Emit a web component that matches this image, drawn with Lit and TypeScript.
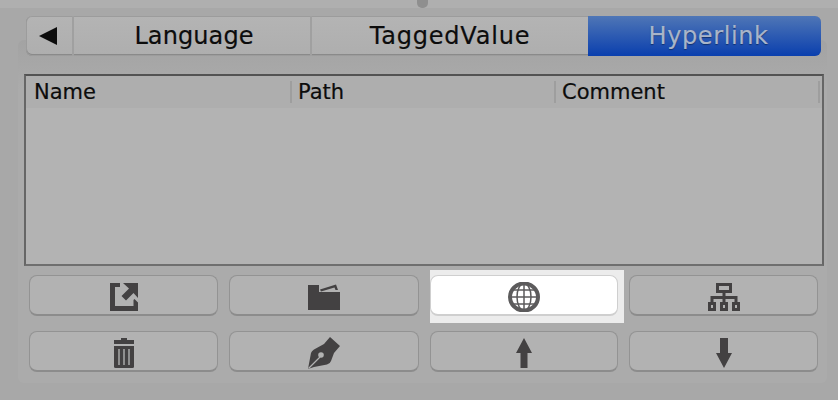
import { css, html, LitElement, svg } from "lit";
import { customElement } from "lit/decorators.js";

const icons = {
  open: svg`<svg width="28" height="28" viewBox="0 0 28 28"><path d="M0 0h10v4H5v19h18.500v-6l1 -1l3.500 3.500V28H0zM13 0h15v15l-4.500 -5l-7.500 7.500l-4.500 -4.500l7.500 -7.500z"/></svg>`,
  folder: svg`<svg width="32" height="26" viewBox="0 0 32 26"><path d="M0 1h11v7h21v18H0zM12 5.500l16 -5l2 5.500h-2.500l-1 -2.500l-13.500 4z"/></svg>`,
  globe: svg`<svg width="32" height="30" viewBox="0 0 32 30" fill="none" stroke="#5c5b5c"><ellipse cx="16" cy="15" rx="14" ry="13.500" stroke-width="4"/><ellipse cx="16" cy="15" rx="7" ry="13.500" stroke-width="1.500"/><path d="M16 1v28M2 15h28M4.500 8h23M4.500 22h23" stroke-width="1.500"/></svg>`,
  tree: svg`<svg width="32" height="28" viewBox="0 0 32 28" fill="none" stroke="#434142" stroke-width="3"><path d="M9.500 1.500h13v7h-13zM1.500 20.500h5v6h-5zM13.500 20.500h5v6h-5zM25.500 20.500h5v6h-5zM16 9v11M4 20v-5.500h24V20"/></svg>`,
  trash: svg`<svg width="20" height="30" viewBox="0 0 20 30"><path d="M7 0h6v2h7v4H0V2h7z"/><path d="M0 8h20v20.500q0 1.500 -1.500 1.500h-17q-1.500 0 -1.500 -1.500z"/><path d="M4 11h2v16H4zM9 11h2v16H9zM14 11h2v16h-2z" fill="#8f8f8f"/></svg>`,
  pen: svg`<svg width="32" height="32" viewBox="0 0 32 32"><path d="M22 0l10 9l-6 7l-3 8q-1 3 -4 3.500L6 30l-6 2l3 -16q.500 -2 3 -3.500L16 7z"/><path d="M.500 31.500L12 20" stroke="#b2b2b2" stroke-width="1.300" fill="none"/><circle cx="13" cy="18" r="2.800" fill="#b2b2b2"/></svg>`,
  up: svg`<svg width="16" height="30" viewBox="0 0 16 30"><path d="M8 0l8 15h-4.500v15h-7V15H0z"/></svg>`,
  down: svg`<svg width="16" height="30" viewBox="0 0 16 30"><path d="M4 0h8v15h4l-8 15l-8 -15h4z"/></svg>`,
};

@customElement("app-root")
export class AppRoot extends LitElement {
  static styles = css`
    :host {
      display: block;
      width: 838px;
      height: 400px;
      overflow: hidden;
      background: #a8a8a8;
      font-family: "DejaVu Sans", sans-serif;
      color: #0c0c0c;
    }

    .strip {
      height: 8px;
      background: #afafaf;
      display: flex;
      justify-content: center;
    }

    .knob {
      width: 11px;
      height: 8px;
      margin-left: 6px;
      background: #8f8f8f;
      border-radius: 0 0 5px 5px;
    }

    .tabs {
      position: relative;
      z-index: 1;
      display: flex;
      height: 40px;
      margin: 8px 17px 0 26px;
      box-sizing: border-box;
      border-radius: 6px;
      overflow: hidden;
      box-shadow: inset 0 0 0 1px #9c9c9c, inset 0 -1px 0 1px #8a8a8a;
      background: linear-gradient(#b4b4b4, #aeaeae);
      font-size: 24px;
      -webkit-text-stroke: 0.2px currentColor;
    }

    .tab {
      display: flex;
      align-items: center;
      justify-content: center;
      border-right: 2px solid #a0a0a0;
      box-sizing: border-box;
    }

    .back { width: 48px; }
    .language { width: 238px; padding-left: 4px; letter-spacing: 0.1px; }
    .tagged { width: 276px; border-right: none; letter-spacing: 0.8px; }

    .hyperlink {
      flex: 1;
      border: none;
      padding-left: 8px;
      letter-spacing: 0.6px;
      background: linear-gradient(#4f76b6, #0a3fae);
      color: #a9b5c9;
      text-shadow: 0 1px 1px #10306e;
    }

    .triangle {
      width: 0;
      height: 0;
      border-top: 9.5px solid transparent;
      border-bottom: 9.5px solid transparent;
      border-right: 18px solid #0c0c0c;
      margin-right: 3px;
    }

    .panel {
      margin: -16px 11px 0 18px;
      height: 343px;
      box-sizing: border-box;
      padding: 34px 3px 0 6px;
      border-radius: 6px;
      background: linear-gradient(#a3a3a3, #ababab 50px);
    }

    .table {
      height: 192px;
      box-sizing: border-box;
      background: #b3b3b3;
      border: 2px solid #666;
      border-top-color: #535353;
      border-bottom-color: #6f6f6f;
    }

    .head {
      display: grid;
      grid-template-columns: 266px 264px 264px;
      height: 32px;
      background: #aeaeae;
      font-size: 21px;
      align-items: center;
      -webkit-text-stroke: 0.2px currentColor;
    }

    .head div {
      height: 22px;
      line-height: 22px;
      padding-left: 6px;
      box-sizing: border-box;
      border-right: 2px solid #9e9e9e;
    }

    .head div:first-child { padding-left: 8px; }

    .actions {
      position: relative;
      z-index: 0;
      display: grid;
      grid-template-columns: 189px 190px 188px 189px;
      gap: 15px 11px;
      margin: 9px 0 0 5px;
    }

    .action {
      position: relative;
      height: 41px;
      padding-top: 3px;
      display: flex;
      align-items: center;
      justify-content: center;
      box-sizing: border-box;
      background: #b2b2b2;
      border: 1px solid #939393;
      border-bottom: 2px solid #8c8c8c;
      border-radius: 8px;
      fill: #434142;
    }

    .action.focus {
      background: #fff;
      border-color: #cfcfcf;
    }

    .action.focus::before {
      content: "";
      position: absolute;
      inset: -6px -7px -9px -1px;
      background: #ececec;
      z-index: -1;
    }
  `;

  render() {
    const buttons = [
      icons.open, icons.folder, icons.globe, icons.tree,
      icons.trash, icons.pen, icons.up, icons.down,
    ];
    return html`
      <div class="strip"><div class="knob"></div></div>
      <div class="tabs">
        <div class="tab back"><div class="triangle"></div></div>
        <div class="tab language">Language</div>
        <div class="tab tagged">TaggedValue</div>
        <div class="tab hyperlink">Hyperlink</div>
      </div>
      <div class="panel">
        <div class="table">
          <div class="head">
            <div>Name</div>
            <div>Path</div>
            <div>Comment</div>
          </div>
        </div>
        <div class="actions">
          ${buttons.map(
            (icon, i) => html`<div class="action ${i === 2 ? "focus" : ""}">${icon}</div>`
          )}
        </div>
      </div>
    `;
  }
}
